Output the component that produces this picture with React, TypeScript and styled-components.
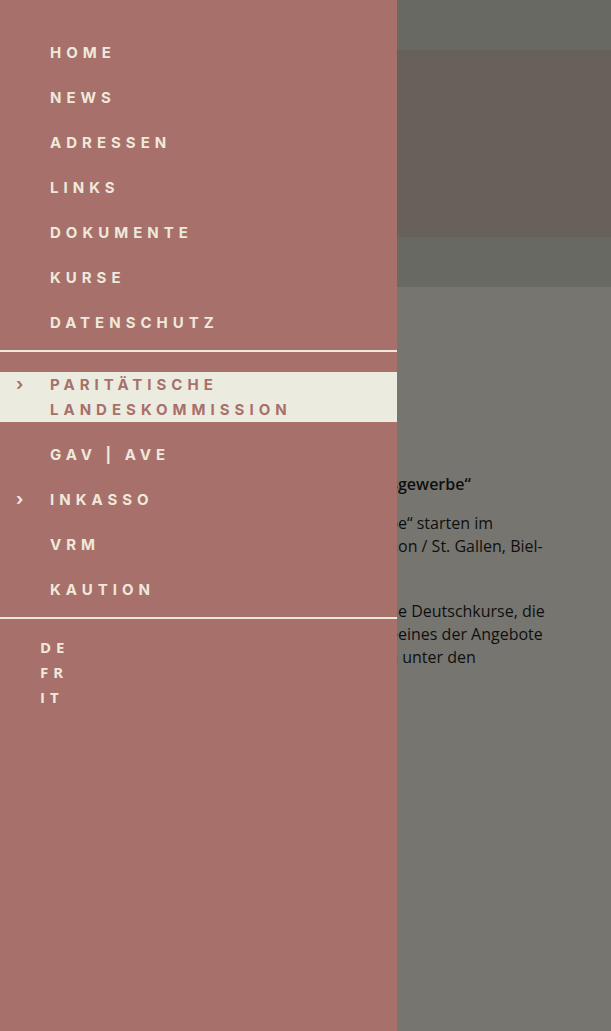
import React from 'react';
import styled, {createGlobalStyle} from 'styled-components';

const GlobalStyle = createGlobalStyle`
    html, body {
        margin: 0;
        padding: 0;
    }
    body {
        background: #ecebe0;
        font-family: "Open Sans", "Liberation Sans", sans-serif;
        color: #2a2a2a;
    }
`;

const mainItems = ['HOME', 'NEWS', 'ADRESSEN', 'LINKS', 'DOKUMENTE', 'KURSE', 'DATENSCHUTZ'];
const subItems = [
    {label: 'GAV | AVE', sub: false},
    {label: 'INKASSO', sub: true},
    {label: 'VRM', sub: false},
    {label: 'KAUTION', sub: false},
];
const languages = ['DE', 'FR', 'IT'];

export default function App() {
    return (
        <>
            <GlobalStyle/>
            <Page>
                <Header/>
                <Hero/>
                <SubBar/>
                <Content>
                    <Title>
                        <Hidden>Neue Kurse „Deutsch für das Reinigungs</Hidden>
                        <span>gewerbe“</span>
                    </Title>
                    <Paragraph>
                        <Line>
                            <Hidden>Die Kurse „Deutsch für das Reinigungsgewerb</Hidden>
                            <span>e“ starten im</span>
                        </Line>
                        <Line>
                            <Hidden>Herbst in den Regionen Zürich, Basel, Bern, Lausanne, Luzern, Si</Hidden>
                            <span>on / St. Gallen, Biel-</span>
                        </Line>
                        <Line>Bienne und Lugano.</Line>
                    </Paragraph>
                    <Paragraph>
                        <Line>
                            <Hidden>Die Paritätische Landeskommission unterstützt di</Hidden>
                            <span>e Deutschkurse, die</span>
                        </Line>
                        <Line>
                            <Hidden>von den Mitarbeitenden besucht werden. Wenn Sie </Hidden>
                            <span>eines der Angebote</span>
                        </Line>
                        <Line>
                            <Hidden>nutzen möchten, finden Sie alle Informationen</Hidden>
                            <span>&nbsp;unter den</span>
                        </Line>
                        <Line>folgenden Links.</Line>
                    </Paragraph>
                </Content>
            </Page>
            <Backdrop/>
            <Drawer>
                <MenuList $pt={30}>
                    {mainItems.map(item => (
                        <MenuItem key={item}>{item}</MenuItem>
                    ))}
                </MenuList>
                <Divider/>
                <MenuList $pt={10}>
                    <ActiveItem>
                        <Chevron $active>›</Chevron>
                        PARITÄTISCHE<br/>LANDESKOMMISSION
                    </ActiveItem>
                    {subItems.map(item => (
                        <MenuItem key={item.label}>
                            {item.sub && <Chevron>›</Chevron>}
                            {item.label}
                        </MenuItem>
                    ))}
                </MenuList>
                <Divider/>
                <LangList>
                    {languages.map(lang => (
                        <LangItem key={lang}>{lang}</LangItem>
                    ))}
                </LangList>
            </Drawer>
        </>
    );
}

const Page = styled.div`
    min-height: 1031px;
    background: #ecebe0;
`;

const Header = styled.header`
    height: 50px;
    background: #d0d2c6;
`;

const Hero = styled.div`
    height: 187px;
    background: #cec2b2;
`;

const SubBar = styled.div`
    height: 50px;
    background: #d0d2c6;
`;

const Content = styled.main`
    padding: 185px 20px 0;
`;

const Title = styled.h2`
    display: flex;
    margin: 0 0 16px;
    font-size: 16px;
    font-weight: 600;
    line-height: 24px;
    white-space: nowrap;
    color: #1e1e1e;
`;

const Paragraph = styled.p`
    margin: 0 0 19px;
    font-size: 16px;
    line-height: 23px;
    color: #1e1e1e;
`;

const Line = styled.span`
    display: flex;
    white-space: nowrap;
`;

const Hidden = styled.span`
    flex: none;
    width: 378px;
    display: flex;
    justify-content: flex-end;
    overflow: hidden;
`;

const Backdrop = styled.div`
    position: fixed;
    inset: 0;
    background: rgba(0, 0, 0, 0.5);
`;

const Drawer = styled.nav`
    position: fixed;
    top: 0;
    left: 0;
    bottom: 0;
    width: 397px;
    background: #a8706a;
    font-family: Inter, "Noto Sans", sans-serif;
    color: #efe9dc;
`;

const MenuList = styled.ul<{ $pt: number }>`
    list-style: none;
    margin: 0;
    padding: ${p => p.$pt}px 0 5px;
`;

const MenuItem = styled.li`
    position: relative;
    padding: 10px 0 10px 50px;
    font-size: 15px;
    font-weight: 700;
    line-height: 25px;
    letter-spacing: 5px;
`;

const ActiveItem = styled(MenuItem)`
    margin: 10px 0;
    padding-top: 0;
    padding-bottom: 0;
    background: #ecebe0;
    color: #a8706a;
`;

const Chevron = styled.span<{ $active?: boolean }>`
    position: absolute;
    left: 16px;
    top: ${p => (p.$active ? 0 : 10)}px;
    font-size: 17px;
    font-weight: 700;
    letter-spacing: 0;
`;

const Divider = styled.hr`
    margin: 0;
    border: none;
    height: 2px;
    background: #efe9dc;
`;

const LangList = styled.ul`
    list-style: none;
    margin: 0;
    padding: 16px 0 0 40px;
`;

const LangItem = styled.li`
    font-family: "Open Sans", sans-serif;
    font-size: 15px;
    font-weight: 700;
    line-height: 25px;
    letter-spacing: 5px;
`;
